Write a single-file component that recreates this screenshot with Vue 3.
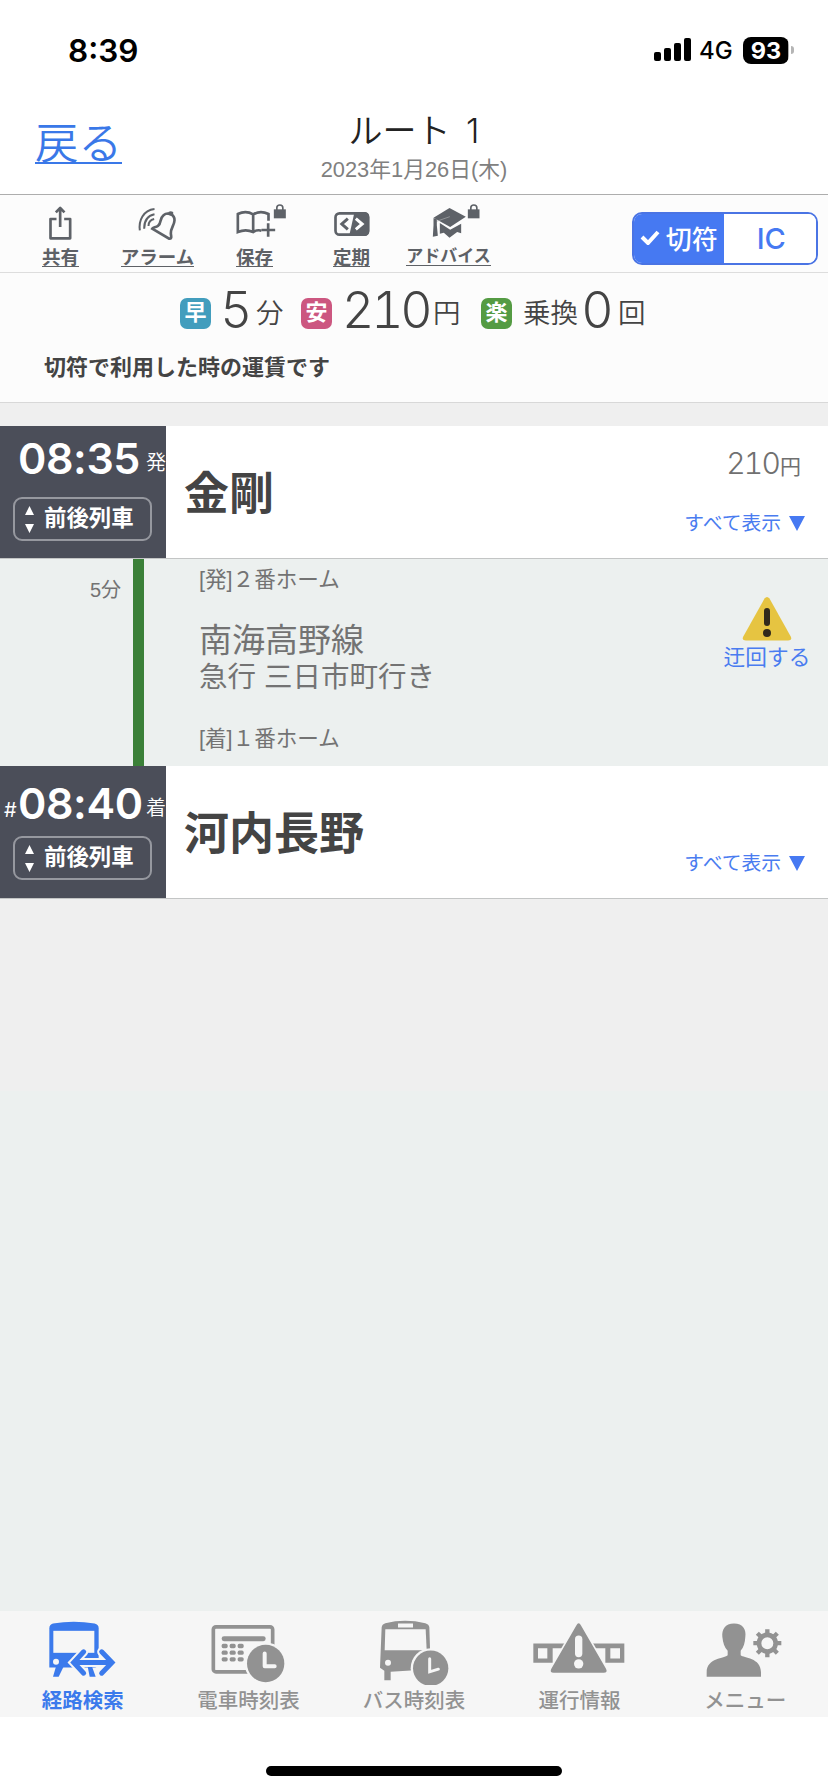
<script setup>
import { ref } from 'vue'

const fareType = ref('ticket')

const tools = [
  { id: 'share', label: '共有' },
  { id: 'alarm', label: 'アラーム' },
  { id: 'save', label: '保存' },
  { id: 'pass', label: '定期' },
  { id: 'advice', label: 'アドバイス' }
]

const tabs = [
  { id: 'route', label: '経路検索' },
  { id: 'train', label: '電車時刻表' },
  { id: 'bus', label: 'バス時刻表' },
  { id: 'status', label: '運行情報' },
  { id: 'menu', label: 'メニュー' }
]
const activeTab = ref('route')
</script>

<template>
  <div class="screen">
    <div class="status-bar">
      <span class="clock">8:39</span>
      <div class="status-right">
        <svg class="signal" width="38" height="24" viewBox="0 0 38 24">
          <rect x="0" y="14" width="7" height="9" rx="2" />
          <rect x="10" y="10" width="7" height="13" rx="2" />
          <rect x="20" y="5" width="7" height="18" rx="2" />
          <rect x="30" y="0" width="7" height="23" rx="2" />
        </svg>
        <span class="network">4G</span>
        <span class="battery">93</span>
        <i class="battery-tip"></i>
      </div>
    </div>

    <header class="nav">
      <a class="back">戻る</a>
      <div class="nav-title">
        <h1>ルート 1</h1>
        <p>2023年1月26日(木)</p>
      </div>
    </header>

    <div class="toolbar">
      <div class="tools">
        <div v-for="tool in tools" :key="tool.id" class="tool">
          <svg v-if="tool.id === 'share'" class="tool-icon" viewBox="91.5 33 180 126">
            <path class="line" d="M168 87H150V145H209V87H191M179 111V54M166 67L179 54L192 67" stroke-width="8" stroke-linejoin="round" />
          </svg>
          <svg v-else-if="tool.id === 'alarm'" class="tool-icon" viewBox="382.5 33 180 126">
            <path class="line" d="M455 116L506 146C516 148 511 136 511 130C510 115 522 105 522 91C523 74 502 64 489 76C475 88 484 99 473 107C466 113 457 111 455 116Z" stroke-width="8" />
            <path class="fill" d="M499 74L505 65Q511 62 518 66L518 78Z" />
            <path class="line" d="M418 121C414 91 428 61 462 57M431 116C431 93 441 77 462 73M444 108C444 97 451 89 461 87" stroke-width="6" />
          </svg>
          <svg v-else-if="tool.id === 'save'" class="tool-icon" viewBox="673.5 33 180 126">
            <path class="line" d="M783 122Q771 118 758 126Q736 116 712 126V72Q736 60 758 73Q780 60 804 72V92M758 73V126" stroke-width="8" />
            <path class="line" d="M803 100V140M783 120H824" stroke-width="8" />
            <path class="fill" d="M820 58H856V85H820Z" />
            <path class="line" d="M829 60V53Q829 45 838 45Q847 45 847 53V60" stroke-width="5" />
          </svg>
          <svg v-else-if="tool.id === 'pass'" class="tool-icon" viewBox="964.5 33 180 126">
            <rect class="line" x="1005" y="70" width="98" height="64" rx="12" stroke-width="8" />
            <path class="fill" d="M1062 66H1094Q1106 68 1106 80V124Q1106 136 1094 138H1046Z" />
            <path class="line" d="M1042 86L1024 102L1042 118" stroke-width="9" />
            <path d="M1066 86L1085 102L1066 118" fill="none" stroke="#fff" stroke-width="9" />
          </svg>
          <svg v-else class="tool-icon" viewBox="13.5 33 180 126">
            <path class="fill" d="M57 83L105 54L154 80L107 111Z" />
            <path d="M106 80L66 94" fill="none" stroke="#a9abae" stroke-width="2" />
            <path class="fill" d="M57 84L67 88V106L70 137L55 140L57 106Z" />
            <path class="fill" d="M76 99L107 119L140 101V130L128 126L105 143L88 128L76 131Z" />
            <path class="fill" d="M160 58H195V85H160Z" />
            <path class="line" d="M169 60V53Q169 45 178 45Q187 45 187 53V60" stroke-width="5" />
          </svg>
          <span class="tool-label" :class="{ long: tool.id === 'advice' }">{{ tool.label }}</span>
        </div>
      </div>
      <div class="segment">
        <button :class="{ on: fareType === 'ticket' }" @click="fareType = 'ticket'">
          <svg width="20" height="15" viewBox="0 0 20 15">
            <path d="M2 7L8 13L18 2" fill="none" stroke="currentColor" stroke-width="4" />
          </svg>
          切符
        </button>
        <button class="ic" :class="{ on: fareType === 'ic' }" @click="fareType = 'ic'">IC</button>
      </div>
    </div>

    <section class="summary">
      <div class="summary-row">
        <span class="badge fast">早</span>
        <span class="big five">5</span>
        <span class="unit minutes">分</span>
        <span class="badge cheap">安</span>
        <span class="big fare">210</span>
        <span class="unit yen">円</span>
        <span class="badge easy">楽</span>
        <span class="unit transfer">乗換</span>
        <span class="big zero">0</span>
        <span class="unit">回</span>
      </div>
      <p class="note">切符で利用した時の運賃です</p>
    </section>

    <section class="station">
      <div class="time-cell">
        <div class="time"><span class="mark"></span><b>08:35</b><span class="kind">発</span></div>
        <button class="around">
          <svg width="9" height="27" viewBox="0 0 9 27"><path d="M4.5 0L9 9H0ZM4.5 27L9 18H0Z" fill="#fff" /></svg>
          <span>前後列車</span>
        </button>
      </div>
      <h2>金剛</h2>
      <div class="station-side">
        <span class="price">210<small>円</small></span>
        <a class="show-all">すべて表示<i></i></a>
      </div>
    </section>

    <section class="leg">
      <span class="duration">5分</span>
      <div class="line-bar"></div>
      <div class="leg-info">
        <p class="platform">[発]２番ホーム</p>
        <p class="line-name">南海高野線</p>
        <p class="bound">急行 三日市町行き</p>
        <p class="platform">[着]１番ホーム</p>
      </div>
      <a class="detour">
        <svg width="50" height="44" viewBox="0 0 50 44">
          <path d="M22.5 1.5Q25 -1.5 27.5 1.5L49 40Q50 43.500 46 43.500H4Q0 43.500 1 40Z" fill="#e6c441" />
          <rect x="22" y="11" width="6" height="18" rx="3" fill="#312a1c" />
          <circle cx="25" cy="36" r="4" fill="#312a1c" />
        </svg>
        迂回する
      </a>
    </section>

    <section class="station last">
      <div class="time-cell">
        <div class="time"><span class="mark">#</span><b>08:40</b><span class="kind">着</span></div>
        <button class="around">
          <svg width="9" height="27" viewBox="0 0 9 27"><path d="M4.5 0L9 9H0ZM4.5 27L9 18H0Z" fill="#fff" /></svg>
          <span>前後列車</span>
        </button>
      </div>
      <h2>河内長野</h2>
      <div class="station-side">
        <a class="show-all">すべて表示<i></i></a>
      </div>
    </section>

    <div class="rest"></div>

    <nav class="tabs">
      <div
        v-for="tab in tabs"
        :key="tab.id"
        class="tab"
        :class="{ active: activeTab === tab.id }"
        @click="activeTab = tab.id"
      >
        <svg v-if="tab.id === 'route'" class="tab-icon" viewBox="98 55 300 200">
          <path d="M147 85Q147 74 158 71Q220 61 283 71Q295 74 295 85V185Q295 203 281 203H147Z" />
          <rect class="hole" x="159" y="93" width="123" height="66" />
          <circle class="hole" cx="167" cy="186" r="9" />
          <path d="M167 200H190L175 231H158ZM262 200H275L286 231H268Z" />
          <path d="M250 156L220 188L250 220M304 156L335 188L304 220M226 188H330" fill="none" stroke="#f6f6f6" stroke-width="27" stroke-linecap="round" />
          <path class="arrow" d="M250 156L220 188L250 220M304 156L335 188L304 220M226 188H330" />
        </svg>
        <svg v-else-if="tab.id === 'train'" class="tab-icon" viewBox="595 55 300 200">
          <rect x="641" y="81" width="178" height="135" rx="8" fill="none" stroke="#929292" stroke-width="11" />
          <rect x="666" y="109" width="132" height="15" rx="7" />
          <template v-for="row in 3" :key="row">
            <rect v-for="col in 3" :key="col" :x="642 + col * 24" :y="112 + row * 20" width="18" height="13" rx="5" />
          </template>
          <circle class="hole" cx="798" cy="191" r="63" />
          <circle cx="798" cy="191" r="56" />
          <path d="M795 161V199H825" fill="none" stroke="#f6f6f6" stroke-width="12" stroke-linecap="round" stroke-linejoin="round" />
        </svg>
        <svg v-else-if="tab.id === 'bus'" class="tab-icon" viewBox="192 55 300 200">
          <path d="M245 82Q246 73 256 70Q315 56 376 70Q387 73 388 82L392 208L272 216V241H253V213L240 204Z" />
          <rect class="hole" x="294" y="71" width="45" height="12" />
          <path class="hole" d="M256 88H377L380 151H254Z" />
          <circle class="hole" cx="264" cy="189" r="9" />
          <circle class="hole" cx="392" cy="205" r="60" />
          <circle cx="392" cy="205" r="53" />
          <path d="M389 177V216L415 208" fill="none" stroke="#f6f6f6" stroke-width="9" stroke-linecap="round" />
        </svg>
        <svg v-else-if="tab.id === 'status'" class="tab-icon" viewBox="29 55 300 200">
          <path d="M39 131H312V189H39Z" />
          <path class="hole" d="M53 145H81V176H53ZM97 145H255V190H97ZM270 145H299V176H270Z" />
          <path d="M168 77Q175 64 182 77L257 207Q263 219 250 219H100Q87 219 93 207Z" stroke="#f6f6f6" stroke-width="10" paint-order="stroke" />
          <rect class="hole" x="164" y="107" width="22" height="65" rx="11" />
          <circle class="hole" cx="175" cy="192" r="14" />
        </svg>
        <svg v-else class="tab-icon" viewBox="526 55 300 200">
          <path d="M643 71C670 71 680 90 677 111C676 129 672 143 663 153V166C672 174 724 173 724 217V231H561V217C561 173 616 176 624 166V153C614 143 610 129 608 111C606 90 616 71 643 71Z" />
          <circle cx="743" cy="130" r="25" fill="none" stroke="#929292" stroke-width="14" />
          <path d="M743 88V104M743 156V172M701 130H717M769 130H785M713 100L724 111M762 149L773 160M713 160L724 149M762 111L773 100" fill="none" stroke="#929292" stroke-width="13" />
        </svg>
        <span>{{ tab.label }}</span>
      </div>
    </nav>
    <footer class="home-area"><div class="home-bar"></div></footer>
  </div>
</template>

<style>
body {
  margin: 0;
  background: #fff;
}
</style>

<style scoped>
.screen {
  width: 828px;
  height: 1792px;
  display: flex;
  flex-direction: column;
  overflow: hidden;
  background: #fff;
  color: #444;
  font-family: "Liberation Sans", "Noto Sans CJK JP", sans-serif;
}

.screen > * {
  flex-shrink: 0;
  box-sizing: border-box;
}

h1,
h2,
p {
  margin: 0;
  font-weight: 400;
}

button {
  font: inherit;
  padding: 0;
}

.status-bar {
  height: 100px;
  display: flex;
  justify-content: space-between;
  align-items: center;
  padding: 0 34px 0 68px;
  color: #000;
  font-family: Inter, sans-serif;
}

.clock {
  font-size: 31.5px;
  font-weight: 600;
}

.status-right {
  display: flex;
  align-items: center;
}

.network {
  margin-left: 7px;
  width: 44px;
  font-size: 24px;
  font-weight: 500;
}

.battery {
  width: 46px;
  height: 27px;
  border-radius: 8px;
  background: linear-gradient(90deg, #000 45px, #aaa 45px);
  color: #fff;
  font-size: 23.5px;
  line-height: 27px;
  font-weight: 700;
  text-align: center;
}

.battery-tip {
  width: 3px;
  height: 8px;
  margin-left: 2px;
  border-radius: 0 3px 3px 0;
  background: #b5b5b5;
}

.nav {
  position: relative;
  height: 95px;
  border-bottom: 1px solid #adadad;
}

.back {
  position: absolute;
  left: 35px;
  top: 18px;
  height: 44px;
  line-height: 52px;
  font-size: 43.5px;
  font-weight: 350;
  color: #3a78e8;
  border-bottom: 2px solid #3a78e8;
}

.nav-title {
  text-align: center;
}

.nav-title h1 {
  padding-top: 9px;
  font-size: 34px;
  line-height: 44px;
  color: #222;
  font-family: Inter, "Noto Sans CJK JP", sans-serif;
  font-weight: 350;
  word-spacing: 6px;
}

.nav-title p {
  margin-top: 3px;
  font-size: 21.8px;
  line-height: 28px;
  color: #808080;
}

.toolbar {
  height: 78px;
  display: flex;
  padding-left: 12px;
  background: #fcfcfc;
  border-bottom: 1px solid #ddd;
}

.tools {
  display: grid;
  grid-template-columns: repeat(5, 97px);
}

.tool {
  display: flex;
  flex-direction: column;
  align-items: center;
  padding-top: 6px;
}

.tool-icon {
  width: 60px;
  height: 42px;
  overflow: visible;
}

.tool-icon .line {
  fill: none;
  stroke: #5e6268;
}

.tool-icon .fill {
  fill: #5e6268;
}

.tool-label {
  height: 23px;
  line-height: 29px;
  font-size: 18.5px;
  font-weight: 600;
  color: #5e6166;
  border-bottom: 1px solid #5e6166;
}

.tool-label.long {
  height: 22px;
  line-height: 28px;
  font-size: 17px;
}

.segment {
  display: flex;
  box-sizing: border-box;
  width: 186px;
  height: 53px;
  margin: 17px 0 0 135px;
  border: 2px solid #4a74e4;
  border-radius: 10px;
  background: #fff;
  overflow: hidden;
}

.segment button {
  flex: 1;
  display: flex;
  align-items: center;
  justify-content: center;
  gap: 6px;
  padding-bottom: 2px;
  border: 0;
  background: #fff;
  color: #4679f2;
  font-size: 26px;
  font-weight: 500;
}

.segment button.on {
  background: #4679f2;
  color: #fff;
}

.segment .ic {
  padding: 0 0 0 3px;
  font-family: Inter, sans-serif;
  font-size: 29px;
}

.summary {
  height: 130px;
  background: #fcfcfc;
  border-bottom: 1px solid #d8d8d8;
}

.summary-row {
  display: flex;
  align-items: center;
  height: 62px;
  padding: 0 0 2px 180px;
  box-sizing: border-box;
}

.badge {
  width: 31px;
  height: 31px;
  margin-top: 20px;
  border-radius: 7px;
  color: #fff;
  font-size: 22px;
  font-weight: 600;
  line-height: 30px;
  text-align: center;
}

.fast { background: #429dbd; }
.cheap { background: #cc5780; }
.easy { background: #549b43; }

.big {
  font-family: Inter, sans-serif;
  font-size: 50px;
  font-weight: 300;
  line-height: 60px;
  margin-top: 13px;
}

.five { width: 45px; text-indent: 10px; }

.fare {
  width: 101px;
  text-indent: 10px;
  font-variant-numeric: tabular-nums;
  letter-spacing: -3.2px;
}

.zero { width: 35px; text-indent: -1px; }

.unit {
  margin-top: 22px;
  font-size: 27.5px;
  font-weight: 350;
  line-height: 40px;
}

.minutes { width: 45px; }
.yen { width: 48px; }
.transfer { margin-left: 11px; width: 60px; }

.note {
  margin-left: 44px;
  font-size: 22px;
  line-height: 32px;
  padding-top: 17px;
  font-weight: 600;
}

.station {
  height: 133px;
  margin-top: 23px;
  display: flex;
  background: #fff;
  border-bottom: 1px solid #c3c5c5;
  position: relative;
}

.station::before {
  content: '';
  position: absolute;
  left: 0;
  right: 0;
  top: -23px;
  height: 23px;
  background: #efefef;
}

.station.last {
  margin-top: 0;
}

.station.last::before {
  display: none;
}

.time-cell {
  width: 166px;
  background: #4b4e59;
  color: #fff;
  overflow: hidden;
}

.time {
  height: 71px;
  padding-top: 2px;
  box-sizing: border-box;
  line-height: 60px;
  white-space: nowrap;
}

.last .time {
  height: 70px;
  padding-top: 7px;
}

.time span,
.time b {
  display: inline-block;
}

.mark {
  width: 14px;
  padding-left: 4px;
  font-family: Inter, sans-serif;
  font-size: 20px;
  line-height: 30px;
  vertical-align: 2px;
}

.time b {
  width: 128px;
  font-family: Inter, sans-serif;
  font-size: 43px;
  font-weight: 600;
  letter-spacing: -0.4px;
}

.kind {
  font-size: 20px;
  font-weight: 350;
  line-height: 30px;
  vertical-align: 4px;
}

.around {
  display: flex;
  align-items: center;
  gap: 10px;
  box-sizing: border-box;
  width: 139px;
  height: 44px;
  margin-left: 13px;
  padding-left: 10px;
  border: 2px solid #96989f;
  border-radius: 9px;
  background: transparent;
  color: #fff;
  font-size: 22.4px;
  font-weight: 600;
}

.around span {
  padding-bottom: 6px;
}

.station h2 {
  margin-left: 18px;
  font-size: 45px;
  font-weight: 700;
  line-height: 137px;
}

.station-side {
  flex: 1;
  display: flex;
  flex-direction: column;
  align-items: flex-end;
  justify-content: flex-end;
  padding: 0 23px 20px 0;
}

.price {
  font-family: Inter, sans-serif;
  font-size: 30px;
  font-weight: 300;
  line-height: 40px;
  margin: 0 4px 23px 0;
  color: #707070;
  font-variant-numeric: tabular-nums;
  letter-spacing: -1.8px;
}

.price small {
  margin-left: 1px;
  font-family: "Noto Sans CJK JP", sans-serif;
  font-size: 21px;
  font-weight: 400;
  letter-spacing: 0;
}

.show-all {
  display: flex;
  align-items: center;
  gap: 8px;
  font-size: 19.8px;
  line-height: 30px;
  color: #4a7cf0;
}

.show-all i {
  border: 8.5px solid transparent;
  border-top: 15px solid #4679f2;
  border-bottom: 0;
}

.leg {
  height: 207px;
  display: flex;
  background: #ecf0ef;
  color: #737373;
}

.duration {
  width: 43px;
  margin-left: 90px;
  padding-top: 16px;
  font-size: 20px;
  line-height: 30px;
}

.line-bar {
  width: 11px;
  background: #3b8038;
}

.leg-info {
  width: 524px;
  padding-left: 55px;
}

.platform {
  font-size: 21.6px;
  line-height: 30px;
  padding-top: 6px;
}

.line-name {
  margin-top: 26px;
  font-size: 33px;
  line-height: 40px;
}

.bound {
  font-size: 28.5px;
  line-height: 33px;
  margin-bottom: 24px;
}

.detour {
  display: flex;
  flex-direction: column;
  align-items: center;
  width: 88px;
  padding-top: 38px;
  font-size: 21.7px;
  line-height: 34px;
  color: #4a7cf0;
}

.rest {
  flex: 1 1 auto;
  background: linear-gradient(#efefef 192px, #ecf0ef 192px);
}

.tabs {
  display: grid;
  grid-template-columns: repeat(5, 1fr);
  height: 106px;
  background: #f6f6f6;
}

.tab {
  display: flex;
  flex-direction: column;
  align-items: center;
  padding-top: 7px;
  font-size: 20.5px;
  font-weight: 500;
  line-height: 24px;
  color: #929292;
}

.tab-icon {
  width: 100px;
  height: 67px;
  margin-bottom: 4px;
  fill: #929292;
}

.tab-icon .hole {
  fill: #f6f6f6;
}

.tab.active {
  color: #3b7aec;
  font-weight: 600;
}

.tab.active .tab-icon {
  fill: #3b7aec;
}

.arrow {
  fill: none;
  stroke: #3b7aec;
  stroke-width: 15;
  stroke-linecap: round;
}

.home-area {
  height: 75px;
  padding-top: 49px;
}

.home-bar {
  width: 296px;
  height: 10px;
  margin: 0 auto;
  border-radius: 5px;
  background: #000;
}
</style>
